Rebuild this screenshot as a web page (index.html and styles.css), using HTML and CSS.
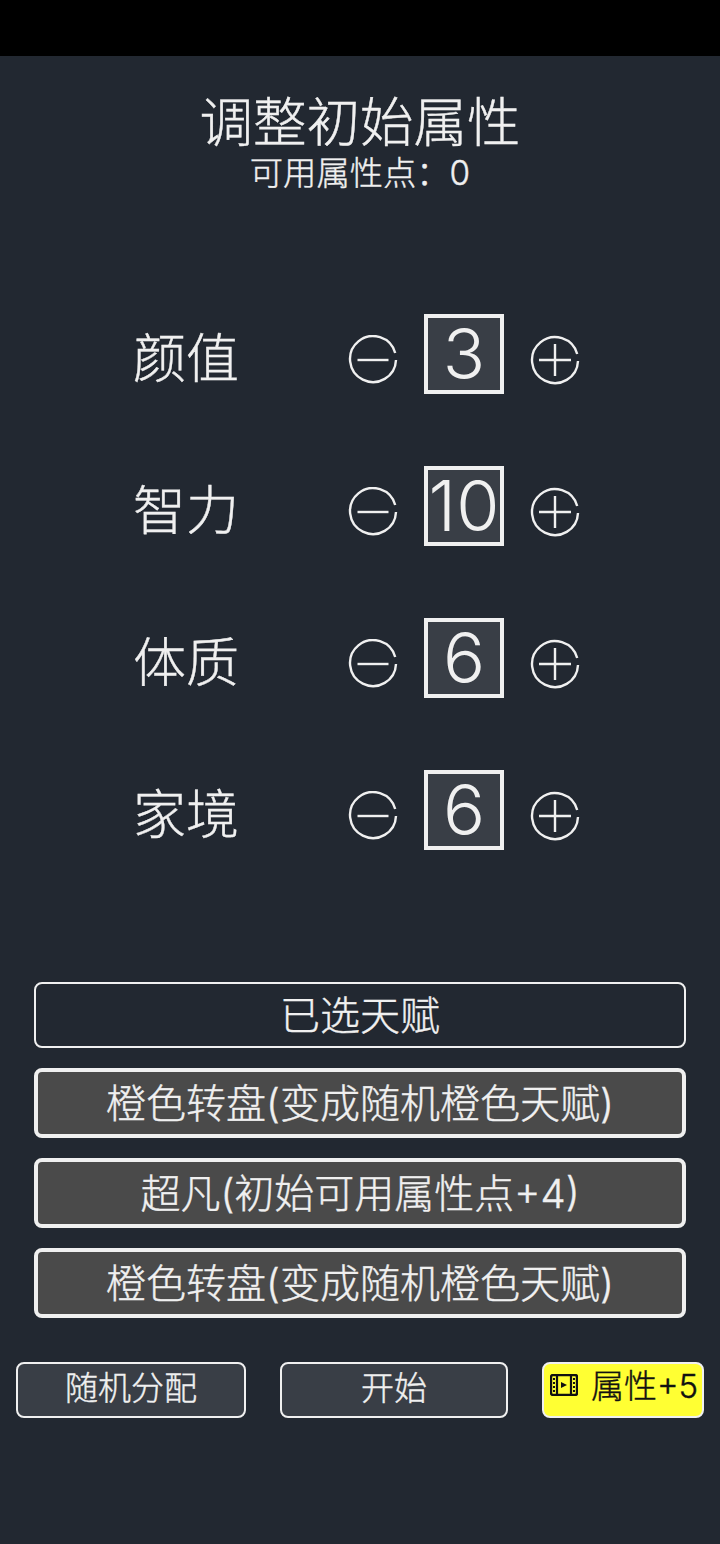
FILE: index.html
```html
<!DOCTYPE html>
<html lang="zh-CN">
<head>
    <meta charset="UTF-8">
    <meta name="viewport" content="width=device-width, initial-scale=1.0">
    <title>调整初始属性</title>
    <link rel="stylesheet" href="styles.css">
</head>
<body>
    <div class="status-bar"></div>
    <div class="page">
        <h1 class="title">调整初始属性</h1>
        <div class="points">可用属性点：<span class="num">0</span></div>

        <div class="attrs">
            <div class="attr">
                <span class="attr-name">颜值</span>
                <svg class="step" viewBox="0 0 50 50"><path d="M48 25A23 23 0 1 1 47.2 18"/><path d="M9.5 25H40.5"/></svg>
                <span class="attr-value">3</span>
                <svg class="step" viewBox="0 0 50 50"><path d="M48 26A23 23 0 1 1 47.2 19"/><path d="M9 25H41M25 9V41"/></svg>
            </div>
            <div class="attr">
                <span class="attr-name">智力</span>
                <svg class="step" viewBox="0 0 50 50"><path d="M48 25A23 23 0 1 1 47.2 18"/><path d="M9.5 25H40.5"/></svg>
                <span class="attr-value">10</span>
                <svg class="step" viewBox="0 0 50 50"><path d="M48 26A23 23 0 1 1 47.2 19"/><path d="M9 25H41M25 9V41"/></svg>
            </div>
            <div class="attr">
                <span class="attr-name">体质</span>
                <svg class="step" viewBox="0 0 50 50"><path d="M48 25A23 23 0 1 1 47.2 18"/><path d="M9.5 25H40.5"/></svg>
                <span class="attr-value">6</span>
                <svg class="step" viewBox="0 0 50 50"><path d="M48 26A23 23 0 1 1 47.2 19"/><path d="M9 25H41M25 9V41"/></svg>
            </div>
            <div class="attr">
                <span class="attr-name">家境</span>
                <svg class="step" viewBox="0 0 50 50"><path d="M48 25A23 23 0 1 1 47.2 18"/><path d="M9.5 25H40.5"/></svg>
                <span class="attr-value">6</span>
                <svg class="step" viewBox="0 0 50 50"><path d="M48 26A23 23 0 1 1 47.2 19"/><path d="M9 25H41M25 9V41"/></svg>
            </div>
        </div>

        <div class="talents">
            <button class="talent-head">已选天赋</button>
            <button class="talent">橙色转盘(变成随机橙色天赋)</button>
            <button class="talent">超凡(初始可用属性点+4)</button>
            <button class="talent">橙色转盘(变成随机橙色天赋)</button>
        </div>

        <div class="actions">
            <button class="action random">随机分配</button>
            <button class="action start">开始</button>
            <button class="action bonus">
                <svg class="film" viewBox="0 0 28 22">
                    <rect x="1" y="1" width="26" height="20" rx="2" fill="none" stroke="#111" stroke-width="2.4"/>
                    <path d="M7 1V21M21 1V21" fill="none" stroke="#111" stroke-width="2.2"/>
                    <path d="M3 5H5M3 9H5M3 13H5M3 17H5M23 5H25M23 9H25M23 13H25M23 17H25" fill="none" stroke="#111" stroke-width="2"/>
                    <path d="M11 8L17 11L11 14Z" fill="#111"/>
                </svg>
                <span>属性+5</span>
            </button>
        </div>
    </div>
</body>
</html>
```

FILE: styles.css
```css
* {
    box-sizing: border-box;
}
body {
    margin: 0;
    height: 1544px;
    overflow: hidden;
    background: #222831;
    color: #f0f0f0;
    font-family: Inter, "Noto Sans CJK SC", sans-serif;
    font-weight: 300;
    -webkit-text-stroke: 0.4px currentColor;
}
button {
    font-family: inherit;
    font-weight: inherit;
    color: inherit;
    padding: 0;
}
.status-bar {
    height: 56px;
    background: #000;
}
.title {
    margin: 37px 0 0;
    height: 60px;
    line-height: 60px;
    font-size: 53.5px;
    font-weight: 300;
    text-align: center;
}
.points {
    height: 40px;
    line-height: 40px;
    font-size: 33.3px;
    text-align: center;
}
.attrs {
    margin-top: 121px;
    display: flex;
    flex-direction: column;
    gap: 72px;
    padding-left: 133px;
}
.attr {
    display: flex;
    align-items: center;
    height: 80px;
}
.attr-name {
    width: 215px;
    margin-top: 9px;
    font-size: 53px;
    line-height: 60px;
}
.step {
    width: 50px;
    height: 50px;
    margin-top: 12px;
    fill: none;
    stroke: #f0f0f0;
    stroke-width: 2.4px;
}
.attr-value {
    width: 80px;
    height: 80px;
    margin: 0 26px;
    border: 4px solid #f0f0f0;
    background: #393e46;
    font-size: 70px;
    line-height: 72px;
    text-align: center;
    -webkit-text-stroke: 0;
}
.talents {
    margin: 132px 34px 0;
    display: flex;
    flex-direction: column;
    gap: 20px;
}
.talent-head,
.talent {
    width: 100%;
    font-size: 40px;
    padding-bottom: 7px;
    border-style: solid;
    border-color: #f0f0f0;
    border-radius: 8px;
}
.talent-head {
    height: 66px;
    border-width: 2px;
    background: transparent;
}
.talent {
    height: 70px;
    border-width: 4px;
    background: #4a4a4a;
}
.actions {
    margin-top: 44px;
    padding: 0 16px;
    display: flex;
    justify-content: space-between;
}
.action {
    height: 56px;
    font-size: 33px;
    line-height: 48px;
    padding-bottom: 8px;
    border: 2px solid #f0f0f0;
    border-radius: 8px;
    background: #393e46;
}
.random {
    width: 230px;
}
.start {
    width: 228px;
}
.bonus {
    width: 162px;
    display: flex;
    align-items: center;
    padding-left: 6px;
    background: #ffff33;
    color: #111;
    white-space: nowrap;
}
.film {
    width: 28px;
    height: 22px;
    margin-right: 13px;
    margin-bottom: 2px;
    flex: none;
}
```
